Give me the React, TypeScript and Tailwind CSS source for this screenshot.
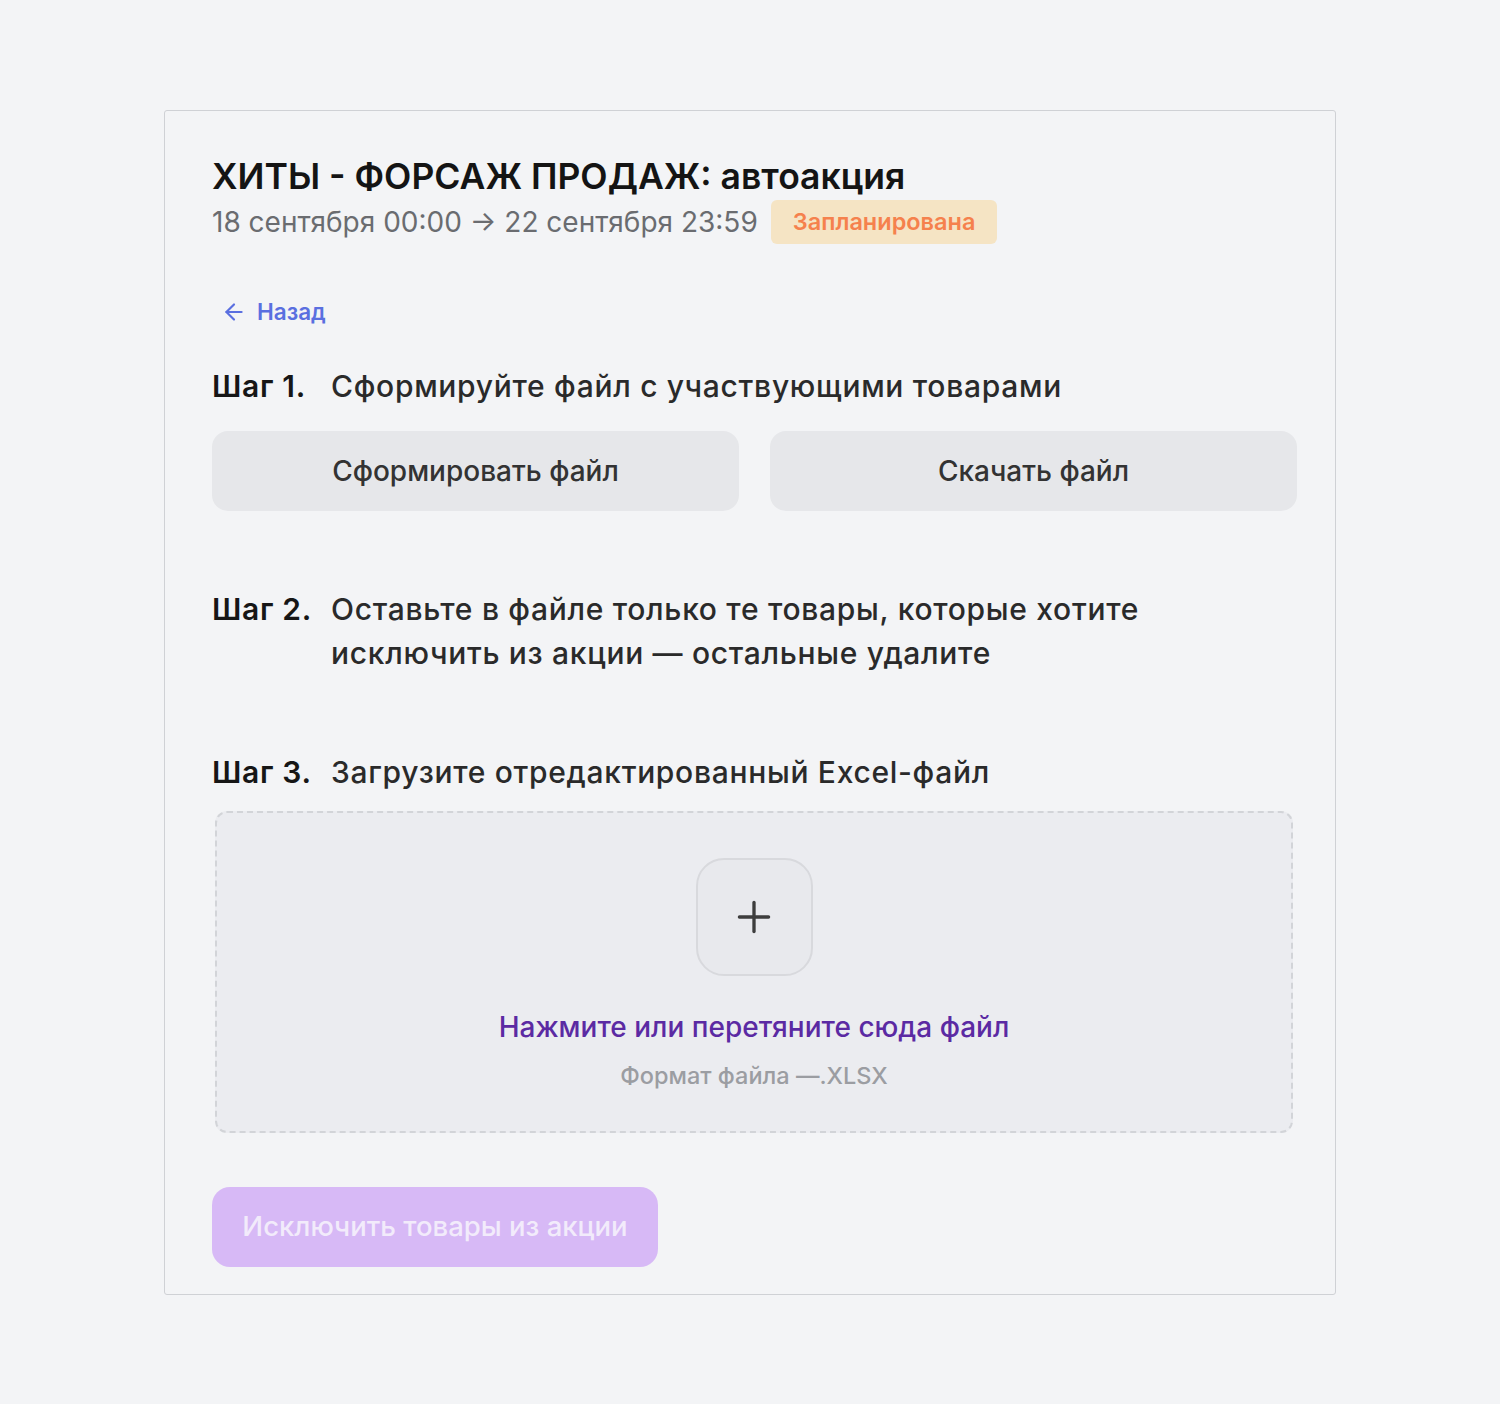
import { ArrowLeft, Plus } from 'lucide-react'

const font = { fontFamily: 'Inter, "Noto Sans", sans-serif' }

function Step({ num, children }: { num: number; children: React.ReactNode }) {
  return (
    <div className="flex text-[30px] leading-[44px] tracking-[0.7px] text-[#2a2a2a]">
      <span className="w-[119px] shrink-0 font-semibold text-[#161616]">Шаг {num}.</span>
      <span className="font-medium">{children}</span>
    </div>
  )
}

export default function App() {
  return (
    <div className="min-h-screen bg-[#f3f4f6] pt-[110px] px-[164px]" style={font}>
      <div className="w-[1172px] h-[1185px] border border-[#cfd1d5] rounded-[3px] pt-[46px] pl-[47px] pr-[38px] pb-[28px]">
        <h1 className="text-[35.5px] leading-[40px] font-semibold text-[#141414]">
          ХИТЫ - ФОРСАЖ ПРОДАЖ: автоакция
        </h1>
        <div className="mt-[3px] flex items-center gap-[13px] h-[44px]">
          <span className="text-[28px] text-[#6a6c70]">18 сентября 00:00 → 22 сентября 23:59</span>
          <span className="h-[44px] px-[22px] flex items-center rounded-[6px] bg-[#f5e4c4] text-[23.5px] font-semibold text-[#f5814d]">
            Запланирована
          </span>
        </div>

        <button className="mt-[56px] ml-[9px] flex items-center gap-[10px] h-[24px] text-[22.5px] font-semibold text-[#5a6fe0]">
          <ArrowLeft size={26} strokeWidth={2} />
          Назад
        </button>

        <div className="mt-[40px]">
          <Step num={1}>Сформируйте файл с участвующими товарами</Step>
        </div>
        <div className="mt-[23px] grid grid-cols-2 gap-[31px]">
          <button className="h-[80px] rounded-[16px] bg-[#e6e7ea] text-[28px] font-medium text-[#333]">
            Сформировать файл
          </button>
          <button className="h-[80px] rounded-[16px] bg-[#e6e7ea] text-[28px] font-medium text-[#333]">
            Скачать файл
          </button>
        </div>

        <div className="mt-[76px]">
          <Step num={2}>
            Оставьте в файле только те товары, которые хотите
            <br />
            исключить из акции — остальные удалите
          </Step>
        </div>

        <div className="mt-[75px]">
          <Step num={3}>Загрузите отредактированный Excel-файл</Step>
        </div>

        <div className="mt-[17px] ml-[3px] mr-[4px] h-[322px] rounded-[12px] border-2 border-dashed border-[#d2d4d8] bg-[#ebecf0] flex flex-col items-center pt-[45px]">
          <div className="w-[117px] h-[118px] rounded-[28px] border-2 border-[#d8d9dd] bg-[#e8e9ed] flex items-center justify-center text-[#3d3d3d]">
            <Plus size={50} strokeWidth={1.6} />
          </div>
          <div className="mt-[34px] text-[28px] leading-[34px] font-medium text-[#5b2aa3]">
            Нажмите или перетяните сюда файл
          </div>
          <div className="mt-[18px] text-[23.5px] leading-[28px] font-medium text-[#9b9da2]">
            Формат файла —.XLSX
          </div>
        </div>

        <button className="mt-[54px] h-[80px] w-[446px] rounded-[18px] bg-[#d7b9f6] text-[27.5px] font-medium text-[#f2ebfb]">
          Исключить товары из акции
        </button>
      </div>
    </div>
  )
}
